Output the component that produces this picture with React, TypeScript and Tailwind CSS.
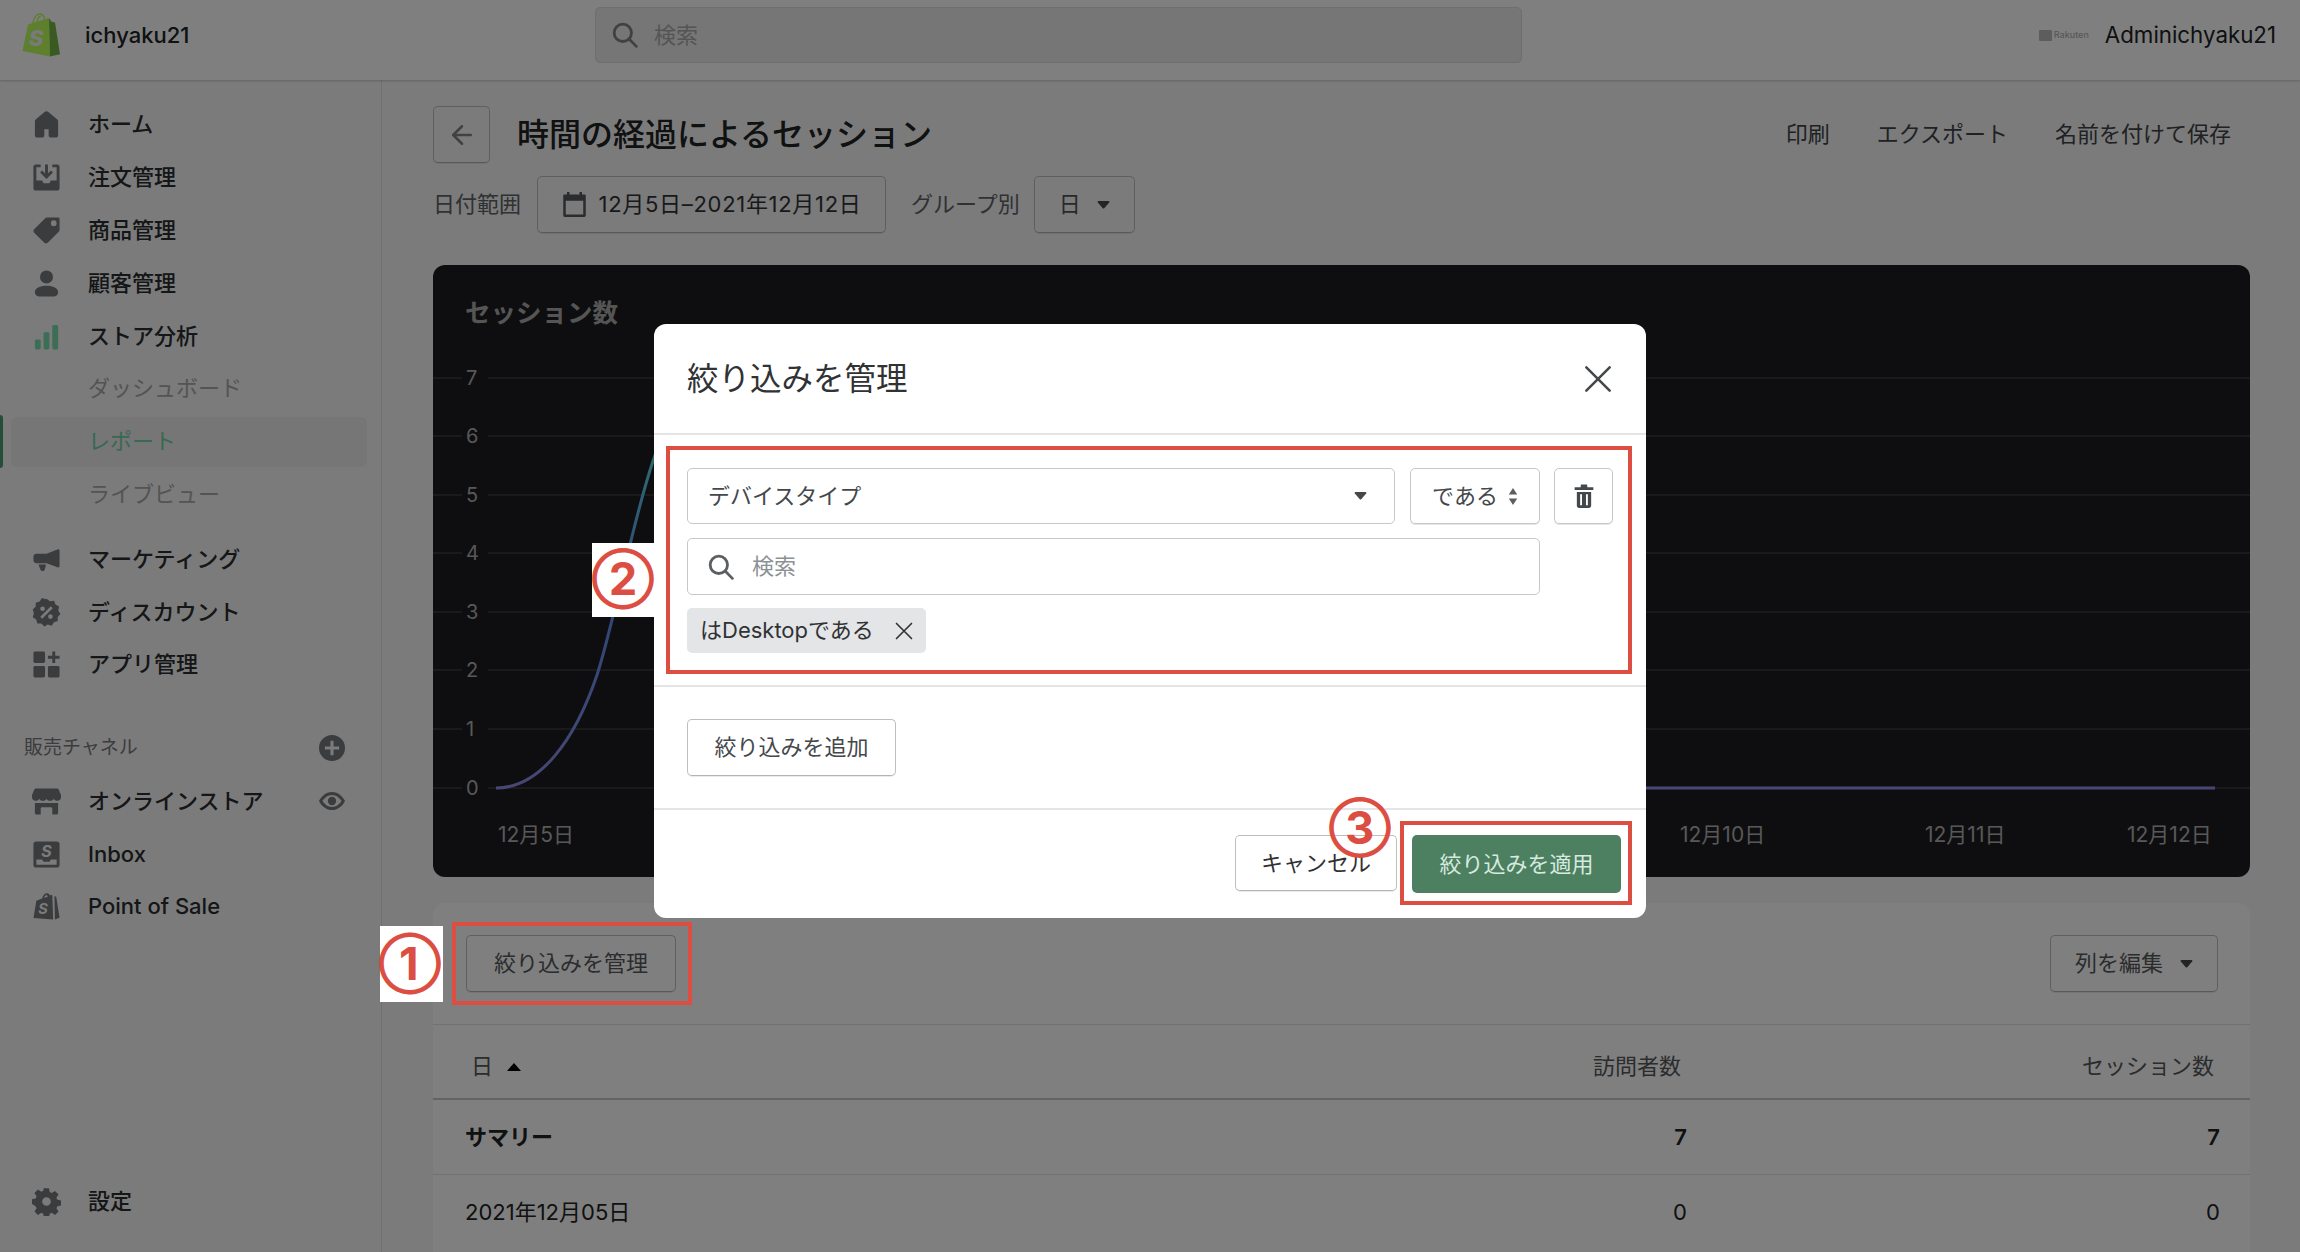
import React from 'react';
import { ArrowLeft } from 'lucide-react';

type IconProps = { className?: string };

function HomeIcon({ className }: IconProps) {
  return (
    <svg viewBox="0 0 20 20" className={className} fill="currentColor">
      <path d="M10 .8c.4 0 .8.1 1.1.4l6.2 5.2c.5.4.7 1 .7 1.6v9.4c0 .9-.7 1.6-1.6 1.6h-3.3c-.9 0-1.6-.7-1.6-1.6v-4.2H8.5v4.2c0 .9-.7 1.6-1.6 1.6H3.6c-.9 0-1.6-.7-1.6-1.6V8c0-.6.2-1.2.7-1.6l6.2-5.2c.3-.3.7-.4 1.1-.4z" />
    </svg>
  );
}
function OrdersIcon({ className }: IconProps) {
  return (
    <svg viewBox="0 0 20 20" className={className} fill="currentColor">
      <path d="M1 2.500C1 1.700 1.700 1 2.500 1H6v2H3v9h4l1 2h4l1-2h4V3h-3V1h3.500c.8 0 1.500.7 1.500 1.500v15c0 .8-.7 1.500-1.500 1.500h-15C1.700 19 1 18.300 1 17.500v-15z" />
      <path d="M9 1h2v6.200l2-2 1.400 1.400L10 11 5.600 6.600 7 5.200l2 2V1z" />
    </svg>
  );
}
function TagIcon({ className }: IconProps) {
  return (
    <svg viewBox="0 0 20 20" className={className} fill="currentColor">
      <path fillRule="evenodd" d="M18 1h-7.600c-.4 0-.8.2-1.100.4L1.500 9.200c-.7.7-.7 1.700 0 2.300l7 7c.6.7 1.600.7 2.300 0l7.800-7.800c.2-.3.4-.7.4-1.100V2c0-.6-.4-1-1-1zm-3 6a2 2 0 1 1 0-4 2 2 0 0 1 0 4z" />
    </svg>
  );
}
function PersonIcon({ className }: IconProps) {
  return (
    <svg viewBox="0 0 20 20" className={className} fill="currentColor">
      <circle cx="10" cy="5.500" r="4.500" />
      <path d="M2 16c0-3 3.500-4.500 8-4.500s8 1.500 8 4.500c0 1.800-1.500 3-3.500 3h-9C3.500 19 2 17.800 2 16z" />
    </svg>
  );
}
function BarsIcon({ className }: IconProps) {
  return (
    <svg viewBox="0 0 20 20" className={className} fill="currentColor">
      <rect x="2" y="12" width="4" height="7" rx="1" />
      <rect x="8" y="7" width="4" height="12" rx="1" />
      <rect x="14" y="2" width="4" height="17" rx="1" />
    </svg>
  );
}
function MegaphoneIcon({ className }: IconProps) {
  return (
    <svg viewBox="0 0 20 20" className={className} fill="currentColor">
      <path d="M18 3c.6 0 1 .4 1 1v10.500c0 .6-.4 1-1 1-.2 0-.3 0-.4-.1L10 12.500H3c-1.100 0-2-.9-2-2V8c0-1.100.9-2 2-2h7l7.600-2.900c.1-.1.2-.1.4-.1z" />
      <path d="M4.500 13.500h5.200l-.9 3.400c-.2.700-.8 1.100-1.500 1.100-.6 0-1.100-.3-1.400-.8l-1.400-3.700z" />
    </svg>
  );
}
function DiscountIcon({ className }: IconProps) {
  return (
    <svg viewBox="0 0 20 20" className={className} fill="currentColor">
      <path fillRule="evenodd" d="M10 .6l2.400 1.600 2.800-.3 1 2.600 2.500 1.300-.6 2.800 1.500 2.400-1.900 2.100.1 2.800-2.700.8-1.500 2.400-2.700-.8-2.400 1.300-2-2-2.800-.1-.8-2.700-2.400-1.500.8-2.700L.5 8l2-2 .1-2.800 2.700-.8L6.800 0l2.700.8.500-.2zM7.300 5.800a1.600 1.600 0 1 0 0 3.200 1.600 1.600 0 0 0 0-3.200zm5.400 5.400a1.600 1.600 0 1 0 0 3.200 1.600 1.600 0 0 0 0-3.200zM13 5.700L5.700 13l1.300 1.300L14.300 7 13 5.700z" />
    </svg>
  );
}
function AppsIcon({ className }: IconProps) {
  return (
    <svg viewBox="0 0 20 20" className={className} fill="currentColor">
      <rect x="1" y="1" width="8" height="8" rx="1" />
      <rect x="1" y="11" width="8" height="8" rx="1" />
      <rect x="11" y="11" width="8" height="8" rx="1" />
      <path d="M14 1h2v3h3v2h-3v3h-2V6h-3V4h3V1z" />
    </svg>
  );
}
function StoreIcon({ className }: IconProps) {
  return (
    <svg viewBox="0 0 20 20" className={className} fill="currentColor">
      <path d="M2.500 1h15c.3 0 .6.200.8.500L20 5.500V7c0 1.400-1.100 2.500-2.500 2.500-.9 0-1.800-.5-2.500-1.300-.7.800-1.500 1.300-2.500 1.300S10.700 9 10 8.200C9.300 9 8.500 9.500 7.500 9.500S5.700 9 5 8.200c-.7.800-1.600 1.300-2.500 1.300C1.100 9.500 0 8.400 0 7V5.500l1.700-4c.2-.3.500-.5.800-.5z" />
      <path d="M2 11h16v7c0 .6-.4 1-1 1h-3v-4c0-.6-.4-1-1-1H7c-.6 0-1 .4-1 1v4H3c-.6 0-1-.4-1-1v-7z" />
    </svg>
  );
}
function InboxIcon({ className }: IconProps) {
  return (
    <svg viewBox="0 0 20 20" className={className}>
      <rect x="1" y="1" width="18" height="18" rx="2" fill="currentColor" />
      <path d="M3 13.500h4l1 1.500h4l1-1.500h4v3.500H3z" fill="#f6f6f7" />
      <text x="10" y="11.500" textAnchor="middle" fontSize="11" fontStyle="italic" fontWeight="700" fill="#f6f6f7">S</text>
    </svg>
  );
}
function PosIcon({ className }: IconProps) {
  return (
    <svg viewBox="0 0 20 20" className={className} fill="currentColor">
      <path d="M1 18l2-12 4-1.500C7.500 2 9 .8 10.500.8c1 0 1.500.7 1.700 1.400L14 2l.6 17L1 18z" />
      <path d="M15.500 3l1.200.200L19 17.800 15.800 19 15.500 3z" />
      <path d="M8.300 4c.3-1 .9-1.800 1.900-2 .5.500.6 1.100.6 1.500L8.300 4z" fill="#f6f6f7" />
      <text x="7.500" y="15.500" textAnchor="middle" fontSize="10" fontStyle="italic" fontWeight="700" fill="#f6f6f7">S</text>
    </svg>
  );
}
function GearIcon({ className }: IconProps) {
  return (
    <svg viewBox="0 0 20 20" className={className} fill="currentColor">
      <path fillRule="evenodd" d="M8.300 .8h3.400l.5 2.700c.5.200 1 .400 1.400.700l2.300-1.500 2.400 2.400-1.500 2.300c.3.400.5.900.7 1.400l2.700.5v3.400l-2.700.5c-.2.500-.4 1-.7 1.400l1.500 2.300-2.400 2.400-2.300-1.500c-.4.300-.9.500-1.400.7l-.5 2.700H8.300l-.5-2.700c-.5-.2-1-.4-1.400-.7l-2.300 1.500-2.400-2.400 1.500-2.300c-.3-.4-.5-.9-.7-1.400L0 11.800V8.400l2.500-.5c.2-.5.4-1 .7-1.400L1.700 4.200l2.400-2.400 2.300 1.500c.4-.3.9-.5 1.400-.7l.5-2.800zM10 7a3 3 0 1 0 0 6 3 3 0 0 0 0-6z" />
    </svg>
  );
}
function PlusCircle({ className }: IconProps) {
  return (
    <svg viewBox="0 0 20 20" className={className} fill="currentColor">
      <path fillRule="evenodd" d="M10 0a10 10 0 1 0 0 20 10 10 0 0 0 0-20zm-1.200 4.500h2.400v4.300h4.300v2.400h-4.300v4.300H8.800v-4.300H4.500V8.800h4.300V4.500z" />
    </svg>
  );
}
function EyeIcon({ className }: IconProps) {
  return (
    <svg viewBox="0 0 20 20" className={className} fill="currentColor">
      <path fillRule="evenodd" d="M10 3C5 3 1.500 6.800 0 10c1.500 3.200 5 7 10 7s8.500-3.800 10-7c-1.500-3.200-5-7-10-7zm0 2.400c3.200 0 5.700 2.200 7.300 4.600-1.600 2.400-4.100 4.600-7.300 4.600S4.300 12.400 2.700 10C4.300 7.600 6.800 5.400 10 5.400zM10 6.800a3.200 3.200 0 1 0 0 6.400 3.200 3.200 0 0 0 0-6.400z" />
    </svg>
  );
}
function CalendarIcon({ className }: IconProps) {
  return (
    <svg viewBox="0 0 20 20" className={className} fill="currentColor">
      <path fillRule="evenodd" d="M4 0h2v2h8V0h2v2h2c.6 0 1 .4 1 1v15.500c0 .8-.7 1.500-1.500 1.500h-15C1.700 20 1 19.300 1 18.500V3c0-.6.400-1 1-1h2V0zM3 7v11h14V7H3z" />
    </svg>
  );
}
function TrashIcon({ className }: IconProps) {
  return (
    <svg viewBox="0 0 20 22" className={className} fill="currentColor">
      <path d="M8 0h4c.6 0 1 .4 1 1v1.500h5.500v2.500h-17V2.500H7V1c0-.6.400-1 1-1z" />
      <path fillRule="evenodd" d="M3.500 7h13v12.500c0 1.100-.9 2-2 2h-9c-1.100 0-2-.9-2-2V7zm3 2v10h1.700V9H6.500zm5.300 0v10h1.700V9h-1.700z" />
    </svg>
  );
}
function SearchIcon({ className }: IconProps) {
  return (
    <svg viewBox="0 0 24 24" className={className} fill="none" stroke="currentColor" strokeWidth="2.600" strokeLinecap="round">
      <circle cx="10" cy="10" r="8" />
      <path d="M16 16l6.500 6.500" />
    </svg>
  );
}
function CrossIcon({ className }: IconProps) {
  return (
    <svg viewBox="0 0 24 24" className={className} fill="none" stroke="currentColor" strokeWidth="2.200" strokeLinecap="round">
      <path d="M2 2l20 20M22 2L2 22" />
    </svg>
  );
}
function CaretDown({ className }: IconProps) {
  return (
    <svg viewBox="0 0 12 8" className={className} fill="currentColor">
      <path d="M1 0h10c.8 0 1.200.9.700 1.500L6.700 7.300c-.4.400-1 .4-1.400 0L.3 1.500C-.2.900.2 0 1 0z" />
    </svg>
  );
}
function ShopifyLogo({ className }: IconProps) {
  return (
    <svg viewBox="0 0 38 44" className={className}>
      <path d="M.5 38L6 11.500l21-6.500 1 38.500z" fill="#bcff5a" />
      <path d="M28 43.500l10-2.200L33 9.500l-3.500-.7L27 5z" fill="#74b444" />
      <path d="M11 10c.5-5 3.500-9 7-9 3 0 4.500 3 4.500 7M15 9c.5-3 2-5.500 4-6" fill="none" stroke="#bcff5a" strokeWidth="1.500" />
      <text x="14" y="33" textAnchor="middle" fontSize="22" fontStyle="italic" fontWeight="800" fill="#f4f4f4">S</text>
    </svg>
  );
}

const topNav = [
  { label: 'ホーム', Icon: HomeIcon },
  { label: '注文管理', Icon: OrdersIcon },
  { label: '商品管理', Icon: TagIcon },
  { label: '顧客管理', Icon: PersonIcon },
];
const midNav = [
  { label: 'マーケティング', Icon: MegaphoneIcon },
  { label: 'ディスカウント', Icon: DiscountIcon },
  { label: 'アプリ管理', Icon: AppsIcon },
];

function NavRow({ label, Icon, green, end }: { label: string; Icon: React.FC<IconProps>; green?: boolean; end?: React.ReactNode }) {
  return (
    <div className="flex items-center h-[52.8px] pl-[32px] pr-[36px] shrink-0">
      <Icon className={`w-[29px] h-[29px] ${green ? 'text-[#76dca8]' : 'text-[#75787d]'}`} />
      <span className="ml-[27px] text-[22px] font-medium text-[#2a2c2e]">{label}</span>
      {end && <span className="ml-auto">{end}</span>}
    </div>
  );
}

function SubRow({ label, active }: { label: string; active?: boolean }) {
  return (
    <div className="relative h-[52.8px] flex items-center shrink-0">
      {active && <div className="absolute left-0 top-0 bottom-0 w-[3px] bg-[#4d9a75] rounded-r" />}
      <div className={`ml-[11px] w-[356px] h-[50px] flex items-center pl-[77px] rounded-md ${active ? 'bg-[#ececee]' : ''}`}>
        <span className={`text-[22px] ${active ? 'text-[#6fd2a6]' : 'text-[#a6a8ab]'}`}>{label}</span>
      </div>
    </div>
  );
}

function Btn({ className, children }: { className?: string; children: React.ReactNode }) {
  return (
    <div className={`flex items-center justify-center border border-[#babfc3] border-b-[#aeb4b9] rounded-[5px] shadow-[0_1px_0_rgba(0,0,0,0.08)] text-[22px] ${className ?? ''}`}>
      {children}
    </div>
  );
}

function Chart() {
  const ys = [
    { v: 7, y: 378 }, { v: 6, y: 436 }, { v: 5, y: 495 }, { v: 4, y: 553 },
    { v: 3, y: 612 }, { v: 2, y: 670 }, { v: 1, y: 729 }, { v: 0, y: 788 },
  ];
  const xs = [
    { t: '12月5日', x: 498 }, { t: '12月10日', x: 1680 }, { t: '12月11日', x: 1925 }, { t: '12月12日', x: 2127 },
  ];
  return (
    <div className="mt-[32px] h-[612px] rounded-xl bg-[#1c1d20] overflow-hidden shrink-0">
      <svg viewBox="433 265 1817 612" className="w-full h-full block">
        <defs>
          <linearGradient id="sessionLine" gradientUnits="userSpaceOnUse" x1="0" y1="788" x2="0" y2="400">
            <stop offset="0" stopColor="#8f8fe8" />
            <stop offset="0.5" stopColor="#5c8ef0" />
            <stop offset="1" stopColor="#5cf0e0" />
          </linearGradient>
        </defs>
        <text x="465" y="322" fontSize="25.500" fontWeight="600" fill="#ababab">セッション数</text>
        {ys.map(r => (
          <g key={r.v}>
            <line x1="433" x2="462" y1={r.y} y2={r.y} stroke="#3c3e42" strokeWidth="1.500" />
            <line x1="488" x2="2250" y1={r.y} y2={r.y} stroke="#3c3e42" strokeWidth="1.500" />
            <text x="466" y={r.y + 7} fontSize="20" fill="#b0b0b0">{r.v}</text>
          </g>
        ))}
        {xs.map(l => (
          <text key={l.t} x={l.x} y="842" fontSize="21" fill="#b0b0b0">{l.t}</text>
        ))}
        <path d="M496 788C540 788 575 740 597 675C615 620 630 530 653 461C680 380 710 378 740 378C800 378 1000 788 1100 788L2215 788" fill="none" stroke="url(#sessionLine)" strokeWidth="3" />
      </svg>
    </div>
  );
}

function TableCard() {
  return (
    <div className="mt-[26px] bg-white rounded-t-xl flex-1 text-[22px] text-[#202223]">
      <div className="h-[122px] border-b border-[#e1e3e5] pl-[33px] pr-[32px] pt-[32px] flex items-start justify-between">
        <Btn className="w-[210px] h-[57px] text-[#55585b]">絞り込みを管理</Btn>
        <Btn className="w-[168px] h-[57px] text-[#55585b] gap-[17px]">
          列を編集
          <CaretDown className="w-[13px] h-[8px] text-[#45484b]" />
        </Btn>
      </div>
      <div className="h-[75px] border-b-2 border-[#c4c7cb] flex items-center pl-[38px] pr-[36px] pt-[10px] text-[#55585b]">
        <div className="flex-1 flex items-center gap-[14px]">
          日
          <svg viewBox="0 0 14 8" className="w-[14px] h-[8px]" fill="#000"><path d="M7 0l7 8H0z" /></svg>
        </div>
        <div className="text-right">訪問者数</div>
        <div className="w-[533px] text-right">セッション数</div>
      </div>
      <div className="h-[75px] border-b border-[#e1e3e5] flex items-center pl-[32px] pr-[30px] font-semibold">
        <div className="flex-1">サマリー</div>
        <div className="text-right">7</div>
        <div className="w-[533px] text-right">7</div>
      </div>
      <div className="h-[75px] flex items-center pl-[32px] pr-[30px]">
        <div className="flex-1">2021年12月05日</div>
        <div className="text-right">0</div>
        <div className="w-[533px] text-right">0</div>
      </div>
    </div>
  );
}

function FilterModal() {
  return (
    <div className="absolute left-[654px] top-[324px] w-[992px] h-[594px] bg-white rounded-xl flex flex-col text-[#202223]">
      <div className="h-[111px] shrink-0 border-b-2 border-[#e4e5e7] flex items-center justify-between pl-[33px] pr-[34px]">
        <span className="text-[31.500px] text-[#303234]">絞り込みを管理</span>
        <CrossIcon className="w-[28px] h-[28px] text-[#45484b]" />
      </div>
      <div className="h-[252px] shrink-0 border-b-2 border-[#e4e5e7] pl-[33px] pt-[33px]">
        <div className="flex">
          <div className="w-[708px] h-[56px] border border-[#c4c8cc] rounded-[5px] flex items-center pl-[20px] pr-[27px] text-[22px] text-[#45484b] justify-between">
            デバイスタイプ
            <CaretDown className="w-[13px] h-[8px] text-[#45484b]" />
          </div>
          <div className="ml-[15px] w-[130px] h-[56px] border border-[#c4c8cc] rounded-[5px] shadow-[0_1px_0_rgba(0,0,0,0.1)] flex items-center justify-center gap-[10px] text-[22px] text-[#45484b]">
            である
            <svg viewBox="0 0 10 18" className="w-[10px] h-[17px]" fill="#5c5f62"><path d="M5 0l4.500 7h-9zM5 18L.5 11h9z" /></svg>
          </div>
          <div className="ml-[14px] w-[59px] h-[56px] border border-[#c4c8cc] rounded-[5px] shadow-[0_1px_0_rgba(0,0,0,0.1)] flex items-center justify-center">
            <TrashIcon className="w-[22px] h-[25px] text-[#45484b]" />
          </div>
        </div>
        <div className="mt-[14px] w-[853px] h-[57px] border border-[#c4c8cc] rounded-[5px] flex items-center pl-[20px]">
          <SearchIcon className="w-[26px] h-[26px] text-[#5c5f62]" />
          <span className="ml-[18px] text-[22px] text-[#8c9196]">検索</span>
        </div>
        <div className="mt-[13px] w-[239px] h-[45px] bg-[#e4e5e7] rounded-[5px] flex items-center pl-[13px] text-[22px] text-[#303234]">
          はDesktopである
          <CrossIcon className="ml-[21px] w-[18px] h-[18px] text-[#303234]" />
        </div>
      </div>
      <div className="h-[123px] shrink-0 border-b-2 border-[#e4e5e7] pl-[33px] pt-[32px]">
        <Btn className="w-[209px] h-[57px] text-[#45484b]">絞り込みを追加</Btn>
      </div>
      <div className="flex justify-end items-start pt-[25px] pr-[25px] gap-[15px]">
        <Btn className="w-[162px] h-[56px] text-[#303234]">キャンセル</Btn>
        <div className="w-[209px] h-[58px] bg-[#4d7f61] rounded-[5px] flex items-center justify-center text-[22px] text-[#d6eadf]">絞り込みを適用</div>
      </div>
    </div>
  );
}

function Circled({ className, children }: { className: string; children: string }) {
  return (
    <span className={`absolute flex items-center justify-center leading-none text-[#dc4e41] font-bold text-[45px] w-[62px] h-[62px] ${className}`}>
      {children}
    </span>
  );
}

export default function App() {
  return (
    <div className="relative w-[2300px] h-[1252px] overflow-hidden bg-[#f6f6f7] font-[Inter,'Noto_Sans_CJK_JP',sans-serif]">
      <header className="h-[80px] bg-white shadow-[0_1px_2px_rgba(0,0,0,0.2)] relative flex items-center pb-[10px]">
        <ShopifyLogo className="ml-[22px] w-[38px] h-[44px]" />
        <span className="ml-[25px] text-[22px] font-medium text-[#202223]">ichyaku21</span>
        <div className="absolute left-[595px] top-[7px] w-[927px] h-[56px] bg-[#ececed] border border-[#dcdcde] rounded-[5px] flex items-center pl-[16px]">
          <SearchIcon className="w-[26px] h-[26px] text-[#808285]" />
          <span className="ml-[16px] text-[22px] text-[#a8aaad]">検索</span>
        </div>
        <div className="ml-auto pr-[24px] flex items-center">
          <div className="flex items-center gap-[2px] opacity-40">
            <div className="w-[13px] h-[11px] bg-[#55585b] rounded-[1px]" />
            <span className="text-[9px] font-medium text-[#303234]">Rakuten</span>
          </div>
          <span className="ml-[16px] text-[22.300px] text-[#202223]">Adminichyaku21</span>
        </div>
      </header>

      <div className="flex h-[1172px]">
        <aside className="w-[382px] shrink-0 border-r border-[#e1e3e5] flex flex-col pt-[18.6px] pb-[24.6px]">
          {topNav.map(n => <NavRow key={n.label} label={n.label} Icon={n.Icon} />)}
          <NavRow label="ストア分析" Icon={BarsIcon} green />
          <SubRow label="ダッシュボード" />
          <SubRow label="レポート" active />
          <SubRow label="ライブビュー" />
          <div className="h-[12px] shrink-0" />
          {midNav.map(n => <NavRow key={n.label} label={n.label} Icon={n.Icon} />)}
          <div className="h-[83.600px] shrink-0 flex items-center justify-between pl-[24px] pr-[36px] pt-[30px]">
            <span className="text-[19px] text-[#77797c]">販売チャネル</span>
            <PlusCircle className="w-[26px] h-[26px] text-[#75787d]" />
          </div>
          <NavRow label="オンラインストア" Icon={StoreIcon} end={<EyeIcon className="w-[26px] h-[26px] text-[#75787d]" />} />
          <NavRow label="Inbox" Icon={InboxIcon} />
          <NavRow label="Point of Sale" Icon={PosIcon} />
          <div className="mt-auto"><NavRow label="設定" Icon={GearIcon} /></div>
        </aside>

        <main className="flex-1 pl-[51px] pr-[50px] pt-[26px] flex flex-col">
          <div className="flex items-center">
            <Btn className="w-[57px] h-[57px]"><ArrowLeft className="w-[30px] h-[30px] text-[#7f8287]" strokeWidth={2} /></Btn>
            <h1 className="ml-[27px] text-[32px] font-medium text-[#202223]">時間の経過によるセッション</h1>
            <div className="ml-auto pr-[19px] flex gap-[47px] text-[22px] text-[#404346]">
              <span>印刷</span>
              <span>エクスポート</span>
              <span>名前を付けて保存</span>
            </div>
          </div>
          <div className="mt-[13px] flex items-center text-[22px] text-[#606366]">
            <span>日付範囲</span>
            <Btn className="ml-[16px] w-[349px] h-[57px] text-[#303234] gap-[12px]">
              <CalendarIcon className="w-[25px] h-[27px] text-[#55585b]" />
              <span className="tracking-[0.7px]">12月5日–2021年12月12日</span>
            </Btn>
            <span className="ml-[25px]">グループ別</span>
            <Btn className="ml-[14px] w-[101px] h-[57px] text-[#505356] gap-[16px]">
              日
              <CaretDown className="w-[13px] h-[8px] text-[#45484b]" />
            </Btn>
          </div>
          <Chart />
          <TableCard />
        </main>
      </div>

      <div className="absolute inset-0 bg-black/50" />
      <FilterModal />

      {/* numbered call-outs added on top of the screenshot */}
      <div className="absolute left-[452px] top-[922px] w-[240px] h-[83px] border-[4px] border-[#dc4e41]" />
      <div className="absolute left-[666px] top-[446px] w-[966px] h-[228px] border-[4px] border-[#dc4e41]" />
      <div className="absolute left-[1400px] top-[821px] w-[232px] h-[84px] border-[4px] border-[#dc4e41]" />
      <div className="absolute left-[380px] top-[926px] w-[63px] h-[76px] bg-white" />
      <div className="absolute left-[592px] top-[543px] w-[62px] h-[74px] bg-white" />
      <Circled className="left-[379px] top-[932px]">①</Circled>
      <Circled className="left-[592px] top-[547px]">②</Circled>
      <Circled className="left-[1329px] top-[796px]">③</Circled>
    </div>
  );
}
